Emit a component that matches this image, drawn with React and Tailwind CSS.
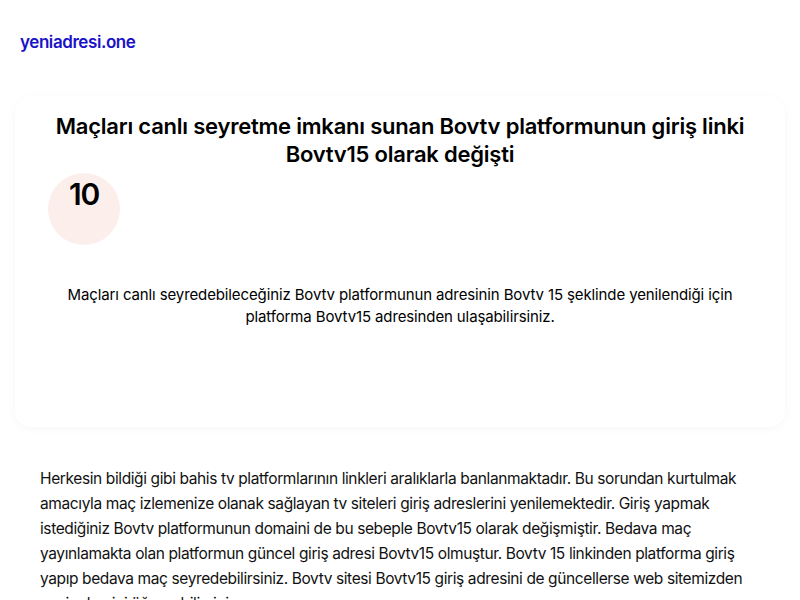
export default function App() {
  return (
    <div className="min-h-screen bg-white text-black" style={{ fontFamily: 'Inter, "Noto Sans", sans-serif' }}>
      <header className="px-5 pt-[30px] pb-[42px]">
        <a className="text-[17px] font-semibold text-[#1a12c9] tracking-tight leading-[22px]">yeniadresi.one</a>
      </header>

      <section className="mx-[15px] rounded-2xl bg-white shadow-[0_2px_10px_rgba(0,0,0,0.035)] px-[40px] pt-[16px] h-[331px]">
        <h1 className="text-center text-[22px] font-semibold leading-[28px] tracking-[-0.01em]">
          Maçları canlı seyretme imkanı sunan Bovtv platformunun giriş linki Bovtv15 olarak değişti
        </h1>
        <div className="mt-[5px] ml-[-7px] w-[72px] h-[72px] rounded-full bg-[#fcefeb] flex justify-center">
          <span className="text-[30px] font-semibold leading-[42px] tracking-[-0.04em]">10</span>
        </div>
        <p className="mt-[39px] text-center text-[15px] leading-[22px] tracking-[-0.008em] px-[5px]">
          Maçları canlı seyredebileceğiniz Bovtv platformunun adresinin Bovtv 15 şeklinde yenilendiği için platforma Bovtv15 adresinden ulaşabilirsiniz.
        </p>
      </section>

      <article className="px-[40px] pt-[39px] pb-10">
        <p className="text-[15.5px] leading-[25px] tracking-[-0.025em] text-[#111]">
          Herkesin bildiği gibi bahis tv platformlarının linkleri aralıklarla banlanmaktadır. Bu sorundan kurtulmak amacıyla maç izlemenize olanak sağlayan tv siteleri giriş adreslerini yenilemektedir. Giriş yapmak istediğiniz Bovtv platformunun domaini de bu sebeple Bovtv15 olarak değişmiştir. Bedava maç yayınlamakta olan platformun güncel giriş adresi Bovtv15 olmuştur. Bovtv 15 linkinden platforma giriş yapıp bedava maç seyredebilirsiniz. Bovtv sitesi Bovtv15 giriş adresini de güncellerse web sitemizden yeni adresini öğrenebilirsiniz.
        </p>
      </article>
    </div>
  );
}
